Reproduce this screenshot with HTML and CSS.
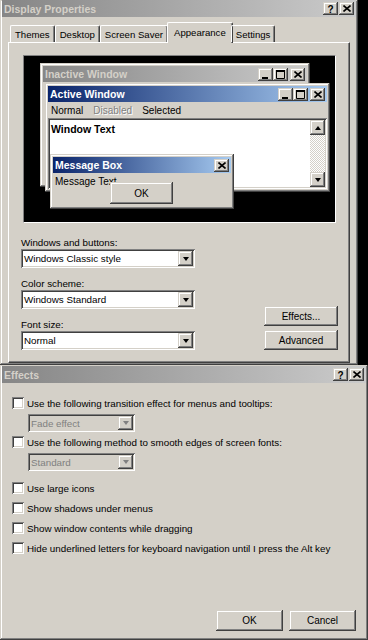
FILE: index.html
```html
<!DOCTYPE html>
<html lang="en">
<head>
  <meta charset="UTF-8">
  <title>Display Properties</title>
  <link rel="stylesheet" href="styles.css">
</head>
<body>

<div class="window display-window">
  <div class="title-bar inactive">
    <span class="title-text">Display Properties</span>
    <div class="caption-buttons">
      <span class="cap-btn help">?</span>
      <span class="cap-btn"><svg width="8" height="7" viewBox="0 0 8 7"><path d="M0.5 0.5L7.5 6.5M7.5 0.5L0.5 6.5" stroke="#000" stroke-width="1.6"/></svg></span>
    </div>
  </div>

  <div class="tabs">
    <span class="tab">Themes</span>
    <span class="tab">Desktop</span>
    <span class="tab">Screen Saver</span>
    <span class="tab tab-active">Appearance</span>
    <span class="tab">Settings</span>
  </div>

  <div class="tab-panel">
    <div class="preview">
      <!-- inactive window -->
      <div class="mini-window mini-inactive">
        <div class="mini-title inactive">
          <span>Inactive Window</span>
          <div class="mini-buttons">
            <span class="cap-btn"><svg width="7" height="9" viewBox="0 0 7 9"><rect x="0" y="7" width="6" height="2" fill="#000"/></svg></span>
            <span class="cap-btn"><svg width="9" height="9" viewBox="0 0 9 9"><path d="M0.5 1.5h8v7h-8z" fill="none" stroke="#000"/><rect x="0" y="0" width="9" height="2" fill="#000"/></svg></span>
            <span class="cap-btn gap"><svg width="8" height="7" viewBox="0 0 8 7"><path d="M0.5 0.5L7.5 6.5M7.5 0.5L0.5 6.5" stroke="#000" stroke-width="1.6"/></svg></span>
          </div>
        </div>
      </div>

      <!-- active window -->
      <div class="mini-window mini-active">
        <div class="mini-title active">
          <span>Active Window</span>
          <div class="mini-buttons">
            <span class="cap-btn"><svg width="7" height="9" viewBox="0 0 7 9"><rect x="0" y="7" width="6" height="2" fill="#000"/></svg></span>
            <span class="cap-btn"><svg width="9" height="9" viewBox="0 0 9 9"><path d="M0.5 1.5h8v7h-8z" fill="none" stroke="#000"/><rect x="0" y="0" width="9" height="2" fill="#000"/></svg></span>
            <span class="cap-btn gap"><svg width="8" height="7" viewBox="0 0 8 7"><path d="M0.5 0.5L7.5 6.5M7.5 0.5L0.5 6.5" stroke="#000" stroke-width="1.6"/></svg></span>
          </div>
        </div>
        <div class="mini-menu">
          <span>Normal</span>
          <span class="disabled">Disabled</span>
          <span>Selected</span>
        </div>
        <div class="mini-client">
          <span class="window-text">Window Text</span>
          <div class="scrollbar">
            <span class="scroll-btn"><span class="arrow-up"></span></span>
            <span class="scroll-track"></span>
            <span class="scroll-btn"><span class="arrow-down"></span></span>
          </div>
        </div>
      </div>

      <!-- message box -->
      <div class="mini-window mini-message">
        <div class="mini-title active">
          <span>Message Box</span>
          <div class="mini-buttons">
            <span class="cap-btn"><svg width="8" height="7" viewBox="0 0 8 7"><path d="M0.5 0.5L7.5 6.5M7.5 0.5L0.5 6.5" stroke="#000" stroke-width="1.6"/></svg></span>
          </div>
        </div>
        <div class="message-body">
          <div class="message-text">Message Text</div>
          <span class="button message-ok">OK</span>
        </div>
      </div>
    </div>

    <div class="appearance-form">
      <div class="form-fields">
        <label class="field-label">Windows and buttons:</label>
        <div class="select">
          <span class="select-value">Windows Classic style</span>
          <span class="select-arrow"><span class="arrow-down"></span></span>
        </div>
        <label class="field-label">Color scheme:</label>
        <div class="select">
          <span class="select-value">Windows Standard</span>
          <span class="select-arrow"><span class="arrow-down"></span></span>
        </div>
        <label class="field-label">Font size:</label>
        <div class="select">
          <span class="select-value">Normal</span>
          <span class="select-arrow"><span class="arrow-down"></span></span>
        </div>
      </div>
      <div class="form-buttons">
        <span class="button side-button">Effects...</span>
        <span class="button side-button">Advanced</span>
      </div>
    </div>
  </div>
</div>

<div class="window effects-window">
  <div class="title-bar inactive">
    <span class="title-text">Effects</span>
    <div class="caption-buttons">
      <span class="cap-btn help">?</span>
      <span class="cap-btn"><svg width="8" height="7" viewBox="0 0 8 7"><path d="M0.5 0.5L7.5 6.5M7.5 0.5L0.5 6.5" stroke="#000" stroke-width="1.6"/></svg></span>
    </div>
  </div>

  <div class="effects-body">
    <div class="check-row"><span class="checkbox"></span>Use the following transition effect for menus and tooltips:</div>
    <div class="select select-disabled">
      <span class="select-value">Fade effect</span>
      <span class="select-arrow"><span class="arrow-down"></span></span>
    </div>
    <div class="check-row"><span class="checkbox"></span>Use the following method to smooth edges of screen fonts:</div>
    <div class="select select-disabled">
      <span class="select-value">Standard</span>
      <span class="select-arrow"><span class="arrow-down"></span></span>
    </div>
    <div class="check-row spaced"><span class="checkbox"></span>Use large icons</div>
    <div class="check-row"><span class="checkbox"></span>Show shadows under menus</div>
    <div class="check-row"><span class="checkbox"></span>Show window contents while dragging</div>
    <div class="check-row"><span class="checkbox"></span>Hide underlined letters for keyboard navigation until I press the Alt key</div>

    <div class="dialog-buttons">
      <span class="button dialog-button">OK</span>
      <span class="button dialog-button">Cancel</span>
    </div>
  </div>
</div>

</body>
</html>
```

FILE: styles.css
```css
:root {
  --face: #d4d0c8;
  --shadow: #808080;
  --dark: #404040;
  --light: #ffffff;
  --raised: inset -1px -1px #404040, inset 1px 1px #d4d0c8, inset -2px -2px #808080, inset 2px 2px #ffffff;
  --sunken: inset 1px 1px #808080, inset -1px -1px #ffffff, inset 2px 2px #404040, inset -2px -2px #d4d0c8;
}

* {
  margin: 0;
  padding: 0;
  box-sizing: border-box;
}

html, body {
  width: 368px;
  height: 640px;
  overflow: hidden;
  background: #000;
  font-family: 'Liberation Sans', Arial, sans-serif;
  font-size: 9.8px;
  color: #000;
}

.window {
  background: var(--face);
  box-shadow: var(--raised);
  display: flex;
  flex-direction: column;
}

.display-window {
  width: 358px;
  height: 365px;
  padding: 0 2px 2px 2px;
}

.effects-window {
  width: 368px;
  height: 275px;
  padding: 1px 2px 2px 2px;
}

/* title bars */
.title-bar {
  height: 17px;
  display: flex;
  align-items: center;
  justify-content: space-between;
  padding: 0 2px 0 2px;
}

.inactive {
  background: linear-gradient(to right, #868686, #cbcbcb);
  color: #d4d0c8;
}

.active {
  background: linear-gradient(to right, #0a246a, #a6caf0);
  color: #fff;
}

.title-text {
  font-weight: bold;
  font-size: 10.5px;
}

.caption-buttons {
  display: flex;
  gap: 1px;
}

.cap-btn {
  width: 15px;
  height: 13px;
  background: var(--face);
  box-shadow: var(--raised);
  display: flex;
  align-items: center;
  justify-content: center;
  font-weight: bold;
  font-size: 10px;
  color: #000;
}

.cap-btn.help {
  padding-top: 1px;
}

/* tabs */
.tabs {
  display: flex;
  align-items: flex-end;
  height: 25px;
  padding-left: 8px;
  position: relative;
  z-index: 1;
}

.tab {
  height: 17px;
  padding: 0 4px;
  display: flex;
  align-items: center;
  border-top: 1px solid var(--light);
  border-left: 1px solid var(--light);
  border-right: 1px solid var(--dark);
  border-radius: 2px 2px 0 0;
  box-shadow: inset -1px 0 var(--shadow);
  font-size: 9.6px;
}

.tab-active {
  height: 21px;
  margin: 0 -2px -1px -1px;
  padding: 0 6px 2px 6px;
  background: var(--face);
}

.tab-panel {
  margin-left: 6px;
  width: 342px;
  height: 321px;
  border-top: 1px solid var(--light);
  border-left: 1px solid var(--light);
  border-right: 1px solid var(--dark);
  border-bottom: 1px solid var(--dark);
  box-shadow: inset -1px -1px var(--shadow);
  padding: 12px 12px 0 12px;
}

/* preview */
.preview {
  position: relative;
  width: 313px;
  height: 168px;
  margin-left: 2px;
  background: #000;
  border: 1px solid;
  border-color: #808080 #fff #fff #808080;
}

.mini-window {
  position: absolute;
  background: var(--face);
  box-shadow: var(--raised);
  padding: 3px;
  display: flex;
  flex-direction: column;
}

.mini-inactive {
  left: 16px;
  top: 7px;
  width: 270px;
  height: 124px;
}

.mini-active {
  left: 21px;
  top: 27px;
  width: 285px;
  height: 109px;
}

.mini-message {
  left: 26px;
  top: 98px;
  width: 184px;
  height: 55px;
}

.mini-title {
  height: 16px;
  display: flex;
  align-items: center;
  justify-content: space-between;
  padding: 0 2px 0 2px;
  font-weight: bold;
  font-size: 10.5px;
  flex-shrink: 0;
}

.mini-buttons {
  display: flex;
}

.mini-buttons .cap-btn {
  width: 15px;
  height: 13px;
}

.mini-buttons .cap-btn.gap {
  margin-left: 2px;
}

.mini-menu {
  height: 16px;
  display: flex;
  align-items: center;
  gap: 10px;
  padding-left: 3px;
  font-size: 10px;
  flex-shrink: 0;
}

.disabled {
  color: #808080;
  text-shadow: 1px 1px #fff;
}

.mini-client {
  flex-grow: 1;
  background: #fff;
  box-shadow: var(--sunken);
  padding: 2px;
  display: flex;
  justify-content: space-between;
}

.window-text {
  font-weight: bold;
  font-size: 10.5px;
  padding: 3px 0 0 1px;
}

.scrollbar {
  width: 15px;
  display: flex;
  flex-direction: column;
  background: repeating-conic-gradient(#fff 0 25%, #d4d0c8 0 50%) 0 0 / 2px 2px;
}

.scroll-btn {
  width: 15px;
  height: 15px;
  background: var(--face);
  box-shadow: var(--raised);
  display: flex;
  align-items: center;
  justify-content: center;
}

.scroll-track {
  flex-grow: 1;
}

.arrow-up {
  width: 0;
  height: 0;
  border-left: 3.5px solid transparent;
  border-right: 3.5px solid transparent;
  border-bottom: 4px solid #000;
}

.arrow-down {
  width: 0;
  height: 0;
  border-left: 3.5px solid transparent;
  border-right: 3.5px solid transparent;
  border-top: 4px solid #000;
}

.message-body {
  padding: 3px 0 0 2px;
}

.message-text {
  font-size: 10px;
  line-height: 12px;
}

.button {
  display: flex;
  align-items: center;
  justify-content: center;
  background: var(--face);
  box-shadow: var(--raised);
  font-size: 10px;
}

.message-ok {
  position: relative;
  width: 63px;
  height: 22px;
  margin: -6px 0 0 55px;
}

/* form */
.appearance-form {
  display: flex;
  justify-content: space-between;
  align-items: flex-end;
}

.field-label {
  display: block;
  height: 13px;
  margin-top: 9px;
  font-size: 9.8px;
  line-height: 13px;
}

.form-fields .field-label:first-child {
  margin-top: 13px;
}

.select {
  width: 174px;
  height: 19px;
  background: #fff;
  box-shadow: var(--sunken);
  padding: 2px;
  display: flex;
  align-items: center;
  justify-content: space-between;
  font-size: 9.8px;
}

.select-value {
  padding-left: 1px;
}

.select-arrow {
  width: 15px;
  height: 15px;
  background: var(--face);
  box-shadow: var(--raised);
  display: flex;
  align-items: center;
  justify-content: center;
}

.form-buttons {
  display: flex;
  flex-direction: column;
  gap: 4px;
  margin-right: -1px;
}

.side-button {
  width: 74px;
  height: 20px;
}

/* effects dialog */
.effects-body {
  flex-grow: 1;
  display: flex;
  flex-direction: column;
  padding: 10px 10px 7px 10px;
}

.check-row {
  height: 20px;
  display: flex;
  align-items: center;
  gap: 3px;
  font-size: 9.8px;
}

.check-row.spaced {
  margin-top: 7px;
}

.checkbox {
  width: 12px;
  height: 12px;
  background: #fff;
  box-shadow: var(--sunken);
  flex-shrink: 0;
}

.select-disabled {
  width: 107px;
  height: 18px;
  margin: 1px 0 0 16px;
  background: var(--face);
  color: #808080;
}

.select-disabled .select-arrow {
  height: 14px;
}

.select-disabled .arrow-down {
  border-top-color: #808080;
}

.dialog-buttons {
  margin-top: auto;
  display: flex;
  justify-content: flex-end;
  gap: 6px;
}

.dialog-button {
  width: 67px;
  height: 21px;
}
```
